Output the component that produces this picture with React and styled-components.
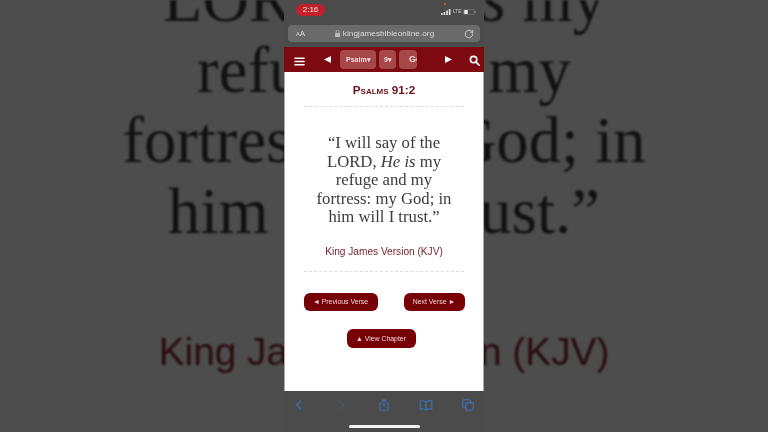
import React from "react";
import styled, { createGlobalStyle } from "styled-components";

const Global = createGlobalStyle`
  html, body { margin: 0; padding: 0; background: #4d4d4d; }
  #root { width: 768px; height: 432px; overflow: hidden; }
`;

const Page = styled.div`
  display: grid;
  grid-template-columns: 768px;
  grid-template-rows: 432px;
  width: 768px;
  height: 432px;
  overflow: hidden;
  background: #4d4d4d;
`;

const Backdrop = styled.div`
  grid-area: 1 / 1;
  height: 432px;
  overflow: hidden;
  display: flex;
  flex-direction: column;
  align-items: center;
  text-align: center;
  filter: blur(0.8px);
`;

const BackdropQuote = styled.div`
  margin-top: -35px;
  font-family: "Liberation Serif", serif;
  font-size: 64.5px;
  line-height: 70.6px;
  letter-spacing: 0.1px;
  color: #111;
  em { font-style: italic; }
`;

const BackdropVersion = styled.div`
  margin-top: 81px;
  font-family: "Liberation Sans", sans-serif;
  font-size: 38.8px;
  line-height: 48px;
  color: #2a0a0e;
`;

const BackdropRule = styled.div`
  flex: none;
  width: 616px;
  margin-top: 56px;
  border-top: 1px dashed #3c3c3c;
`;

const Phone = styled.div`
  grid-area: 1 / 1;
  justify-self: center;
  width: 200px;
  height: 432px;
  display: flex;
  flex-direction: column;
  overflow: hidden;
  filter: blur(0.3px);
`;

const StatusBar = styled.div`
  height: 25px;
  flex: none;
  background: #4b4b4b;
  display: flex;
  align-items: flex-start;
  justify-content: space-between;
  padding: 4px 8px 0 12px;
  box-sizing: border-box;
`;

const TimePill = styled.div`
  width: 29px;
  height: 12px;
  border-radius: 6px;
  background: #c4202c;
  color: #eed;
  font: 8px/12px "Liberation Sans", sans-serif;
  text-align: center;
`;

const StatusIcons = styled.div`
  position: relative;
  display: flex;
  align-items: center;
  gap: 1.5px;
  margin-top: 4px;
  color: #ccc;
  font: 5px/7px "Liberation Sans", sans-serif;
`;

const Dot = styled.span`
  position: absolute;
  left: 3px;
  top: -5px;
  width: 2px;
  height: 2px;
  border-radius: 50%;
  background: #b5762a;
`;

const UrlWrap = styled.div`
  height: 22px;
  flex: none;
  background: #4b4b4b;
  padding: 0 4px;
  box-sizing: border-box;
`;

const UrlBar = styled.div`
  height: 17px;
  border-radius: 4px;
  background: #6a6a6a;
  display: flex;
  align-items: center;
  justify-content: space-between;
  padding: 0 6px 0 8px;
  color: #ddd;
  font: 8.1px/17px "Liberation Sans", sans-serif;
`;

const AaLabel = styled.span`
  font-size: 8px;
  small { font-size: 5.5px; }
`;

const UrlText = styled.span`
  display: flex;
  align-items: center;
  gap: 3px;
  letter-spacing: 0.1px;
`;

const Nav = styled.div`
  height: 25px;
  flex: none;
  background: #7c0a10;
  display: flex;
  align-items: center;
  color: #fff;
  padding-left: 10px;
  box-sizing: border-box;
`;

const NavIcon = styled.svg`
  flex: none;
  margin-left: ${(p) => p.$ml || 0}px;
  margin-top: ${(p) => p.$mt || 0}px;
  display: block;
`;

const SelectChip = styled.div`
  flex: none;
  height: 19px;
  width: ${(p) => p.$w}px;
  margin-left: ${(p) => p.$ml}px;
  border-radius: 4px;
  background: #a6474a;
  color: #f1dcdc;
  font: bold ${(p) => p.$fs || 7}px/19px "Liberation Sans", sans-serif;
  box-sizing: border-box;
  padding-left: ${(p) => p.$pl}px;
  overflow: hidden;
  white-space: nowrap;
`;

const Content = styled.div`
  flex: 1;
  background: #fff;
  border-left: 1px solid #aaa;
  border-right: 1px solid #aaa;
  display: flex;
  flex-direction: column;
  align-items: center;
  min-height: 0;
`;

const Title = styled.h1`
  margin: 11px 0 0;
  font: bold 11.7px/14px "Liberation Sans", sans-serif;
  font-variant: small-caps;
  color: #6b0f1c;
`;

const Rule = styled.div`
  flex: none;
  width: 160px;
  border-top: 1px dashed #ddd;
  margin-top: ${(p) => p.$mt}px;
`;

const Quote = styled.p`
  margin: 27px 0 0;
  width: 160px;
  text-align: center;
  font-family: "Liberation Serif", serif;
  font-size: 16.7px;
  line-height: 18.5px;
  color: #3c3c3c;
  em { font-style: italic; }
`;

const Version = styled.div`
  margin-top: 18px;
  font: 10.15px/13px "Liberation Sans", sans-serif;
  color: #741c2a;
`;

const ButtonRow = styled.div`
  display: flex;
  justify-content: space-between;
  width: 161px;
  margin-top: 21px;
`;

const VerseButton = styled.div`
  height: 18px;
  width: ${(p) => p.$w}px;
  border-radius: 6px;
  background: #760006;
  color: #efd8d8;
  font: 6.9px/18px "Liberation Sans", sans-serif;
  text-align: center;
  white-space: nowrap;
`;

const ChapterButton = styled(VerseButton)`
  height: 19px;
  line-height: 19px;
  margin-top: 18px;
  margin-right: 6px;
`;

const Toolbar = styled.div`
  height: 41px;
  flex: none;
  background: #4b4b4b;
  display: flex;
  flex-direction: column;
  align-items: center;
`;

const ToolbarIcons = styled.div`
  width: 200px;
  height: 33px;
  box-sizing: border-box;
  padding: 7px 9px 0 8px;
  display: flex;
  align-items: flex-start;
  justify-content: space-between;
  color: #3f6fb2;
`;

const HomeBar = styled.div`
  width: 71px;
  height: 3px;
  border-radius: 2px;
  background: #f4f4f4;
  margin-top: 1px;
`;

const Icon = ({ children, size = 14, ml, mt, sw = 2, dim }) => (
  <NavIcon $ml={ml} $mt={mt} width={size} height={size} viewBox="0 0 24 24" fill="none" stroke="currentColor" strokeWidth={sw} strokeLinecap="round" strokeLinejoin="round" opacity={dim ? 0.3 : 1}>
    {children}
  </NavIcon>
);

export default function App() {
  return (
    <Page>
      <Global />
      <Backdrop>
        <BackdropQuote>
          LORD, <em>He is</em> my
          <br />
          refuge and my
          <br />
          fortress: my God; in
          <br />
          him will I trust.”
        </BackdropQuote>
        <BackdropVersion>King James Version (KJV)</BackdropVersion>
        <BackdropRule />
      </Backdrop>
      <Phone>
        <StatusBar>
          <TimePill>2:16</TimePill>
          <StatusIcons>
            <Dot />
            <svg width="10" height="6" viewBox="0 0 10 6" fill="#ddd">
              <rect x="0" y="4" width="1.7" height="2" />
              <rect x="2.6" y="3" width="1.7" height="3" />
              <rect x="5.2" y="1.5" width="1.7" height="4.5" />
              <rect x="7.8" y="0" width="1.7" height="6" />
            </svg>
            <span>LTE</span>
            <svg width="13" height="6" viewBox="0 0 13 6">
              <rect x="0.3" y="0.3" width="11" height="5.4" rx="1.4" fill="none" stroke="#888" strokeWidth="0.6" />
              <rect x="1.2" y="1.1" width="3.6" height="3.8" rx="0.6" fill="#eee" />
              <rect x="11.8" y="2" width="1" height="2" fill="#888" />
            </svg>
          </StatusIcons>
        </StatusBar>
        <UrlWrap>
          <UrlBar>
            <AaLabel><small>A</small>A</AaLabel>
            <UrlText>
              <svg width="5" height="7" viewBox="0 0 5 7" fill="#bbb">
                <rect x="0" y="3" width="5" height="4" rx="0.6" />
                <path d="M1 3V2a1.5 1.5 0 0 1 3 0v1" fill="none" stroke="#bbb" strokeWidth="0.7" />
              </svg>
              kingjamesbibleonline.org
            </UrlText>
            <Icon size={10}>
              <path d="M21 12a9 9 0 1 1-3-6.700L21 8" />
              <path d="M21 3v5h-5" />
            </Icon>
          </UrlBar>
        </UrlWrap>
        <Nav>
          <Icon size={11} sw={3} mt={3}>
            <path d="M2 5h20M2 12h20M2 19h20" />
          </Icon>
          <NavIcon $ml={19} $mt={-1} width="7" height="7" viewBox="0 0 7 7" fill="#fff">
            <path d="M0 3.500 7 0v7z" />
          </NavIcon>
          <SelectChip $w={36} $ml={9} $pl={6}>Psalm▾</SelectChip>
          <SelectChip $w={17} $ml={3} $pl={5}>9▾</SelectChip>
          <SelectChip $w={18} $ml={3} $pl={10} $fs={9}>Go</SelectChip>
          <NavIcon $ml={28} $mt={-1} width="7" height="7" viewBox="0 0 7 7" fill="#fff">
            <path d="M7 3.500 0 0v7z" />
          </NavIcon>
          <Icon size={11} ml={17} sw={3.4} mt={2}>
            <circle cx="10" cy="10" r="7" />
            <path d="m15 15 7 7" />
          </Icon>
        </Nav>
        <Content>
          <Title>Psalms 91:2</Title>
          <Rule $mt={9} />
          <Quote>
            “I will say of the
            <br />
            LORD, <em>He is</em> my
            <br />
            refuge and my
            <br />
            fortress: my God; in
            <br />
            him will I trust.”
          </Quote>
          <Version>King James Version (KJV)</Version>
          <Rule $mt={13} />
          <ButtonRow>
            <VerseButton $w={74}>◄ Previous Verse</VerseButton>
            <VerseButton $w={61}>Next Verse ►</VerseButton>
          </ButtonRow>
          <ChapterButton $w={69}>▲ View Chapter</ChapterButton>
        </Content>
        <Toolbar>
          <ToolbarIcons>
            <Icon size={14} sw={2.2}><path d="m15 5-7 7 7 7" /></Icon>
            <Icon size={14} sw={2.2} dim><path d="m9 5 7 7-7 7" /></Icon>
            <Icon size={14}>
              <path d="M8 9H5v12h14V9h-3" />
              <path d="M12 15V3M8.500 6 12 2.500 15.500 6" />
            </Icon>
            <Icon size={14}>
              <path d="M12 6.500C10 5 5 4.500 2 5v14c3-.5 8 0 10 1.500 2-1.500 7-2 10-1.500V5c-3-.5-8 0-10 1.500Z" />
              <path d="M12 6.500v14" />
            </Icon>
            <Icon size={14}>
              <rect x="8" y="8" width="13" height="13" rx="2" />
              <path d="M16 8V5a2 2 0 0 0-2-2H5a2 2 0 0 0-2 2v9a2 2 0 0 0 2 2h3" />
            </Icon>
          </ToolbarIcons>
          <HomeBar />
        </Toolbar>
      </Phone>
    </Page>
  );
}
